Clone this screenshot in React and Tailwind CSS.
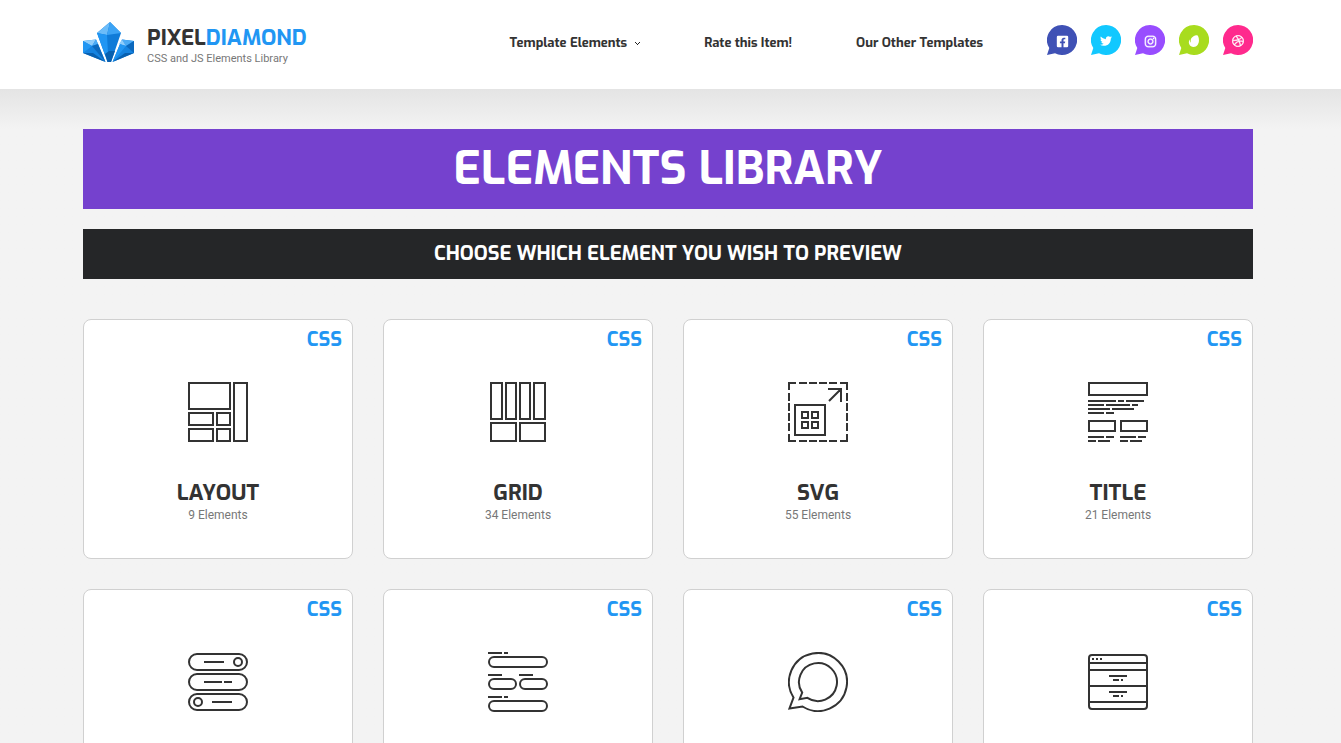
import { FaFacebookSquare, FaTwitter, FaInstagram, FaDribbble } from "react-icons/fa";

const heading = "font-['Exo','Exo_2','Roboto',sans-serif]";

function Logo() {
  return (
    <svg width="51" height="41" viewBox="0 0 51 41" aria-hidden="true">
      <polygon points="0,19 13,17.500 15,22 22.500,40 0,31" fill="#1583e0" />
      <polygon points="0,19 13,17.500 9,24" fill="#8fcdfb" />
      <polygon points="13,17.500 15,22 9,24" fill="#4babf6" />
      <polygon points="0,19 9,24 0,31" fill="#2196f3" />
      <polygon points="9,24 15,22 22.500,40" fill="#0b68bd" />
      <polygon points="0,31 10,31 22.500,40" fill="#0860b0" />
      <polygon points="51,19 39,17.500 37,22 29.500,40 51,31" fill="#1583e0" />
      <polygon points="51,19 39,17.500 43,24" fill="#4babf6" />
      <polygon points="39,17.500 36,22 43,24" fill="#8fcdfb" />
      <polygon points="51,19 43,24 51,31" fill="#0b68bd" />
      <polygon points="43,24 37,22 29.500,40" fill="#2196f3" />
      <polygon points="51,31 42,31 29.500,40" fill="#0860b0" />
      <polygon points="27,0 38,11 28,40 24.500,40 14,11" fill="#0f7bd8" />
      <polygon points="27,0 14,11 24,13" fill="#6bbcf9" />
      <polygon points="27,0 38,11 24,13" fill="#3ba3f5" />
      <polygon points="14,11 24,13 25,31 22,33" fill="#2196f3" />
      <polygon points="22,32 26,29 32,29 28,40 24.500,40" fill="#0860b0" />
    </svg>
  );
}

function Lines({ d }) {
  return <path d={d} strokeWidth="2" />;
}

const art = {
  layout: <Lines d="M1 1h41v26H1zM46 1h13v58H46zM1 31h24v12H1zM29 31h13v12H29zM1 47h24v12H1zM29 47h13v12H29z" />,
  grid: <Lines d="M3 1h11v36H3zM18 1h10v36H18zM32 1h10v36H32zM46 1h11v36H46zM3 41h25v18H3zM32 41h25v18H32z" />,
  svg: (
    <>
      <path d="M0 1H60M0 59H60M1 0V60M59 0V60" strokeWidth="2" strokeDasharray="8 3 8 2 8 2 8 2 8 3 8 0" />
      <Lines d="M7 23h30v30H7zM14 30h6v6h-6zM24 30h6v6h-6zM14 40h6v6h-6zM24 40h6v6h-6zM40 7H53V20M53 7L41 19" />
    </>
  ),
  title: (
    <Lines d="M1 1h58v12H1zM0 19h28M30 19h6M38 19h18M0 23h16M18 23h24M44 23h6M0 27h22M24 27h22M0 31h16M18 31h8M1 39h26v10H1zM33 39h26v10H33zM0 55h16M18 55h8M32 55h16M50 55h8M0 59h8M10 59h12M32 59h8M42 59h12" />
  ),
  button: (
    <>
      <rect x="1" y="2" width="58" height="16" rx="8" strokeWidth="2" />
      <rect x="1" y="22" width="58" height="16" rx="8" strokeWidth="2" />
      <rect x="1" y="42" width="58" height="16" rx="8" strokeWidth="2" />
      <circle cx="50" cy="10" r="4" strokeWidth="2" />
      <circle cx="10" cy="50" r="4" strokeWidth="2" />
      <Lines d="M16 10h20M16 30h18M36 30h8M24 50h20" />
    </>
  ),
  form: (
    <>
      <rect x="1" y="5" width="58" height="10" rx="5" strokeWidth="2" />
      <rect x="1" y="27" width="27" height="10" rx="5" strokeWidth="2" />
      <rect x="32" y="27" width="27" height="10" rx="5" strokeWidth="2" />
      <rect x="1" y="49" width="58" height="10" rx="5" strokeWidth="2" />
      <Lines d="M0 1h14M16 1h4M0 23h14M31 23h14M0 45h14M16 45h4" />
    </>
  ),
  bubble: (
    <Lines d="M5.5 45.5A29 29 0 1 1 14.5 54.5L1.4 56.6ZM14.2 40.6A19 19 0 1 1 19.4 45.8L11.6 47.2Z" />
  ),
  browser: (
    <>
      <rect x="1" y="3" width="58" height="54" rx="3" strokeWidth="2" />
      <Lines d="M1 11h58M1 18h58M1 34h58M1 50h58M4 7h2M8 7h2M12 7h2M21 24h18M25 28h6M33 28h2M21 40h18M25 44h6M33 44h2" />
    </>
  ),
};

const cards = [
  { icon: "layout", name: "LAYOUT", count: "9 Elements" },
  { icon: "grid", name: "GRID", count: "34 Elements" },
  { icon: "svg", name: "SVG", count: "55 Elements" },
  { icon: "title", name: "TITLE", count: "21 Elements" },
  { icon: "button" },
  { icon: "form" },
  { icon: "bubble" },
  { icon: "browser" },
];

function Card({ icon, name, count }) {
  return (
    <a href="#" className="relative flex h-60 flex-col items-center rounded-lg border border-[#d0d0d0] bg-white pt-[62px]">
      <span className={`${heading} absolute top-2 right-2.5 text-xl leading-6 font-bold text-[#2196f3]`}>CSS</span>
      <svg width="60" height="60" viewBox="0 0 60 60" fill="none" stroke="#333" aria-hidden="true">
        {art[icon]}
      </svg>
      {name && (
        <>
          <h3 className={`${heading} mt-[37px] text-[22px] leading-7 font-bold text-[#333]`}>{name}</h3>
          <p className="text-xs leading-4 text-[#777]">{count}</p>
        </>
      )}
    </a>
  );
}

function Leaf() {
  return (
    <svg width="12" height="12" viewBox="0 0 12 12" fill="currentColor" aria-hidden="true">
      <path d="M9.3.3C7.5-.4 4.500 1.300 3.300 3.200 2.300 4.900 2.700 6.800 2.900 7.600 1.900 6.900 1.700 5.300 2 4.200 0 6.400.8 9.400 2.600 10.900c2.100 1.600 5.400 1.300 7-.9C12 6.800 10.800 1.200 9.300.3z" />
    </svg>
  );
}

const socials = [
  { label: "Facebook", color: "text-[#3f51b5]", icon: <FaFacebookSquare size={13} /> },
  { label: "Twitter", color: "text-[#12c8ff]", icon: <FaTwitter size={12} /> },
  { label: "Instagram", color: "text-[#984dff]", icon: <FaInstagram size={13} stroke="currentColor" strokeWidth="14" /> },
  { label: "Envato", color: "text-[#a8dc1e]", icon: <Leaf /> },
  { label: "Dribbble", color: "text-[#ff2a8d]", icon: <FaDribbble size={12} stroke="currentColor" strokeWidth="16" /> },
];

function Social({ label, color, icon }) {
  return (
    <a href="#" aria-label={label} className={`grid size-[30px] place-items-center ${color}`}>
      <svg className="col-start-1 row-start-1" width="30" height="30" viewBox="0 0 30 30" fill="currentColor" aria-hidden="true">
        <path d="M15 0a15 15 0 1 1-7 28.200L0 30l2.300-7A15 15 0 0 1 15 0z" />
      </svg>
      <span className="z-10 col-start-1 row-start-1 pt-0.5 text-white">{icon}</span>
    </a>
  );
}

export default function App() {
  return (
    <div className="min-h-screen bg-[#f3f3f3] font-['Roboto',sans-serif]">
      <header className="bg-white pr-[5px]">
        <div className="mx-auto flex h-[89px] max-w-[1170px] items-start justify-between">
          <a href="#" className="flex gap-[13px] pt-[22px]">
            <Logo />
            <span className="flex flex-col pt-1">
              <span className={`${heading} text-[22px] leading-6 font-bold text-[#333]`}>
                PIXEL<span className="text-[#2196f3]">DIAMOND</span>
              </span>
              <span className="text-[11px] leading-[18px] text-[#777]">CSS and JS Elements Library</span>
            </span>
          </a>
          <div className="flex items-start gap-16 pt-[25px]">
            <nav className={`${heading} flex gap-16 pt-2 text-[13px] leading-5 font-bold text-[#333]`}>
              <a href="#" className="flex items-center gap-2">
                Template Elements
                <svg width="5" height="3" viewBox="0 0 5 3" fill="#222" aria-hidden="true">
                  <path d="M0 0h1v1H0zM1 1h1v1H1zM2 2h1v1H2zM3 1h1v1H3zM4 0h1v1H4z" />
                </svg>
              </a>
              <a href="#">Rate this Item!</a>
              <a href="#">Our Other Templates</a>
            </nav>
            <div className="flex gap-3.5">
              {socials.map((s) => (
                <Social key={s.label} {...s} />
              ))}
            </div>
          </div>
        </div>
      </header>
      <div className="bg-linear-to-b from-[#e4e4e4] to-[#f3f3f3] to-[40px] pt-10 pr-[5px]">
        <main className="mx-auto max-w-[1170px]">
          <h1 className={`${heading} bg-[#7541ce] py-2.5 text-center text-[46px] leading-[60px] font-bold text-white`}>ELEMENTS LIBRARY</h1>
          <h2 className={`${heading} mt-5 bg-[#252628] py-[13px] text-center text-xl leading-6 font-bold text-white`}>
            CHOOSE WHICH ELEMENT YOU WISH TO PREVIEW
          </h2>
          <div className="mt-10 grid grid-cols-4 gap-[30px]">
            {cards.map((c) => (
              <Card key={c.icon} {...c} />
            ))}
          </div>
        </main>
      </div>
    </div>
  );
}
